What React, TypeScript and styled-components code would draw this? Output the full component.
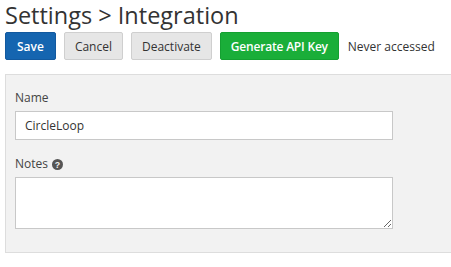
import React from "react";
import styled, { createGlobalStyle } from "styled-components";

const GlobalStyle = createGlobalStyle`
  body {
    margin: 0;
    background: #fff;
    font-family: "Open Sans", "Liberation Sans", sans-serif;
    color: #333;
  }
`;

const Page = styled.div`
  padding: 0 0 0 5px;
`;

const Title = styled.h1`
  margin: 0;
  font-size: 23.5px;
  line-height: 30px;
  font-weight: 400;
  color: #333;
`;

const Toolbar = styled.div`
  display: flex;
  align-items: center;
  gap: 8px;
  margin-top: 2px;
`;

const Button = styled.button<{ $variant?: "primary" | "success" | "default" }>`
  height: 28px;
  padding: 0 ${(p) => (p.$variant === "primary" ? "11px" : "10px")};
  border-radius: 2px;
  font-family: inherit;
  font-size: 12px;
  font-weight: ${(p) => (p.$variant === "default" ? 400 : 600)};
  letter-spacing: ${(p) => (p.$variant === "success" ? "-0.2px" : "0")};
  white-space: nowrap;
  cursor: pointer;
  border: 1px solid
    ${(p) =>
      p.$variant === "primary"
        ? "#12599f"
        : p.$variant === "success"
        ? "#14a031"
        : "#cfcfcf"};
  background: ${(p) =>
    p.$variant === "primary"
      ? "#1565b0"
      : p.$variant === "success"
      ? "#1aae39"
      : "#e6e6e6"};
  color: ${(p) => (p.$variant === "default" ? "#333" : "#fff")};
`;

const Status = styled.span`
  font-size: 12px;
  color: #333;
  white-space: nowrap;
  margin-left: 1px;
`;

const Panel = styled.div`
  margin-top: 14px;
  background: #f2f2f2;
  border: 1px solid #ddd;
  border-right: none;
  padding: 14px 0 23px 9px;
`;

const Field = styled.div`
  display: flex;
  flex-direction: column;
  & + & {
    margin-top: 15px;
  }
`;

const Label = styled.label`
  font-size: 12px;
  line-height: 18px;
  color: #444;
  margin-bottom: 4px;
  display: flex;
  align-items: center;
  gap: 4px;
`;

const Input = styled.input`
  width: 378px;
  height: 29px;
  box-sizing: border-box;
  border: 1px solid #c8c8c8;
  padding: 0 9px;
  font-family: inherit;
  font-size: 12px;
  color: #333;
  background: #fff;
  outline: none;
`;

const TextArea = styled.textarea`
  display: block;
  width: 378px;
  height: 52px;
  box-sizing: border-box;
  border: 1px solid #c8c8c8;
  font-family: inherit;
  font-size: 12px;
  background: #fff;
  outline: none;
  resize: vertical;
`;

const HelpIcon = () => (
  <svg width="11" height="11" viewBox="0 0 10 10">
    <circle cx="5" cy="5" r="5" fill="#555" />
    <text
      x="5"
      y="8.2"
      textAnchor="middle"
      fontSize="8"
      fontWeight="700"
      fill="#f2f2f2"
      fontFamily="Liberation Sans, sans-serif"
    >
      ?
    </text>
  </svg>
);

const App = () => {
  return (
    <Page>
      <GlobalStyle />
      <Title>Settings &gt; Integration</Title>
      <Toolbar>
        <Button $variant="primary">Save</Button>
        <Button $variant="default">Cancel</Button>
        <Button $variant="default">Deactivate</Button>
        <Button $variant="success">Generate API Key</Button>
        <Status>Never accessed</Status>
      </Toolbar>
      <Panel>
        <Field>
          <Label>Name</Label>
          <Input defaultValue="CircleLoop" />
        </Field>
        <Field>
          <Label>
            Notes <HelpIcon />
          </Label>
          <TextArea />
        </Field>
      </Panel>
    </Page>
  );
};

export default App;
